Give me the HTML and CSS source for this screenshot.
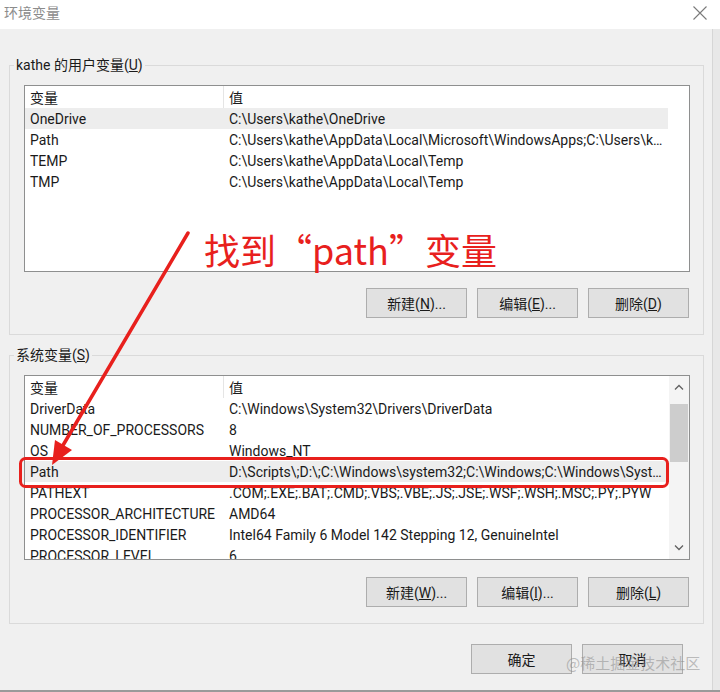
FILE: index.html
```html
<!DOCTYPE html>
<html lang="zh-CN">
<head>
    <meta charset="UTF-8">
    <title>环境变量</title>
    <link rel="stylesheet" href="styles.css">
</head>
<body>
    <!-- barra de titulo -->
    <div class="titlebar">
        <span class="title">环境变量</span>
        <svg class="close" width="14" height="14" viewBox="0 0 14 14">
            <path d="M0.5 0.5 L13.5 13.5 M13.5 0.5 L0.5 13.5" stroke="#7a7a7a" stroke-width="1.1" fill="none"/>
        </svg>
    </div>

    <div class="frame">
        <div class="main">
            <!-- variables de usuario -->
            <fieldset class="group">
                <legend>kathe 的用户变量(<u>U</u>)</legend>
                <div class="list list-user">
                    <div class="rows">
                        <div class="row head"><div class="cell">变量</div><div class="cell">值</div></div>
                        <div class="row selected"><div class="cell">OneDrive</div><div class="cell">C:\Users\kathe\OneDrive</div></div>
                        <div class="row"><div class="cell">Path</div><div class="cell">C:\Users\kathe\AppData\Local\Microsoft\WindowsApps;C:\Users\kathe\AppData\Local\Programs</div></div>
                        <div class="row"><div class="cell">TEMP</div><div class="cell">C:\Users\kathe\AppData\Local\Temp</div></div>
                        <div class="row"><div class="cell">TMP</div><div class="cell">C:\Users\kathe\AppData\Local\Temp</div></div>
                    </div>
                </div>
                <div class="buttons">
                    <button class="btn">新建(<u>N</u>)...</button>
                    <button class="btn">编辑(<u>E</u>)...</button>
                    <button class="btn">删除(<u>D</u>)</button>
                </div>
            </fieldset>

            <!-- variables de sistema -->
            <fieldset class="group group-system">
                <legend>系统变量(<u>S</u>)</legend>
                <div class="list list-system">
                    <div class="rows">
                        <div class="row head"><div class="cell">变量</div><div class="cell">值</div></div>
                        <div class="row"><div class="cell">DriverData</div><div class="cell">C:\Windows\System32\Drivers\DriverData</div></div>
                        <div class="row"><div class="cell">NUMBER_OF_PROCESSORS</div><div class="cell">8</div></div>
                        <div class="row"><div class="cell">OS</div><div class="cell">Windows_NT</div></div>
                        <div class="row selected"><div class="cell">Path</div><div class="cell">D:\Scripts\;D:\;C:\Windows\system32;C:\Windows;C:\Windows\System32\Wbem</div></div>
                        <div class="row"><div class="cell">PATHEXT</div><div class="cell">.COM;.EXE;.BAT;.CMD;.VBS;.VBE;.JS;.JSE;.WSF;.WSH;.MSC;.PY;.PYW</div></div>
                        <div class="row"><div class="cell">PROCESSOR_ARCHITECTURE</div><div class="cell">AMD64</div></div>
                        <div class="row"><div class="cell">PROCESSOR_IDENTIFIER</div><div class="cell">Intel64 Family 6 Model 142 Stepping 12, GenuineIntel</div></div>
                        <div class="row"><div class="cell">PROCESSOR_LEVEL</div><div class="cell">6</div></div>
                    </div>
                    <div class="scrollbar">
                        <div class="sb-btn">
                            <svg width="10" height="6" viewBox="0 0 10 6"><path d="M1 5.5 L5 1.5 L9 5.5" stroke="#606060" stroke-width="1.3" fill="none"/></svg>
                        </div>
                        <div class="sb-track"><div class="sb-thumb"></div></div>
                        <div class="sb-btn">
                            <svg width="10" height="6" viewBox="0 0 10 6"><path d="M1 0.5 L5 4.5 L9 0.5" stroke="#606060" stroke-width="1.3" fill="none"/></svg>
                        </div>
                    </div>
                </div>
                <div class="buttons">
                    <button class="btn">新建(<u>W</u>)...</button>
                    <button class="btn">编辑(<u>I</u>)...</button>
                    <button class="btn">删除(<u>L</u>)</button>
                </div>
            </fieldset>

            <div class="buttons dialog-buttons">
                <button class="btn">确定</button>
                <button class="btn">取消</button>
            </div>
        </div>
        <div class="edge"></div>
    </div>

    <!-- anotacion roja encima -->
    <svg class="annotation" width="720" height="692" viewBox="0 0 720 692">
        <line x1="188" y1="233" x2="62" y2="447" stroke="#e8201d" stroke-width="3.5" stroke-linecap="round"/>
        <polygon points="52,465 72,450 55,440" fill="#e8201d"/>
        <rect x="20.5" y="458.5" width="647" height="28" rx="5" ry="5" fill="none" stroke="#e8201d" stroke-width="3"/>
    </svg>
    <div class="annotation-text">找到“path”变量</div>

    <div class="watermark">@稀土掘金技术社区</div>
</body>
</html>
```

FILE: styles.css
```css
html {
    background-color: #f0f0f0;
}

body {
    margin: 0;
    width: 720px;
    height: 690px;
    overflow: hidden;
    position: relative;
    background-color: #f0f0f0;
    border-bottom: 2px solid #9a9a9a;
    font-family: "Noto Sans CJK SC", sans-serif;
    font-size: 15px;
    color: #1a1a1a;
}

.titlebar {
    height: 24px;
    padding: 0 13px 5px 4px;
    background-color: white;
    display: flex;
    align-items: center;
    justify-content: space-between;
}

.title {
    color: #8c8c8c;
    font-size: 14px;
}

.close {
    margin-top: 1px;
}

.frame {
    display: flex;
    height: 661px;
}

.main {
    width: 712px;
}

.edge {
    width: 7px;
    background-color: #e8e8e8;
    border-left: 1px solid #d6d6d6;
}

.group {
    margin: 26px 8px 0 9px;
    padding: 10px 13px 16px 14px;
    border: 1px solid #dadada;
    min-width: 0;
}

.group legend {
    margin-left: -10px;
    padding: 0 2px;
    line-height: 20px;
    font-size: 14px;
    font-family: Roboto, "Noto Sans CJK SC", sans-serif;
}

.group-system {
    margin-top: 10px;
}

.list {
    width: 666px;
    box-sizing: border-box;
    border: 1px solid #8e8f8f;
    background-color: white;
    display: flex;
    overflow: hidden;
}

.list-user {
    height: 187px;
}

.list-user .rows {
    width: 643px;
}

.list-system {
    height: 185px;
}

.list-system .rows {
    width: 644px;
}

.row {
    display: grid;
    grid-template-columns: 199px 1fr;
    height: 21px;
    font-family: Roboto, "Noto Sans CJK SC", sans-serif;
    font-size: 14px;
}

.row .cell {
    box-sizing: border-box;
    height: 21px;
    padding-top: 2px;
    line-height: 19px;
}

.row.head {
    height: 22px;
}

.row.head .cell {
    font-family: "Noto Sans CJK SC", sans-serif;
    height: 22px;
    padding-top: 0;
    line-height: 22px;
}

.row.head .cell:first-child {
    border-right: 1px solid #e5e5e5;
}

.row.selected {
    background-color: #ededed;
}

.cell {
    padding-left: 5px;
    padding-right: 3px;
    white-space: nowrap;
    overflow: hidden;
    text-overflow: ellipsis;
}

.scrollbar {
    width: 20px;
    margin-left: auto;
    display: flex;
    flex-direction: column;
    background-color: #f4f4f4;
}

.sb-btn {
    height: 22px;
    display: flex;
    align-items: center;
    justify-content: center;
}

.sb-track {
    flex: 1;
    padding: 6px 1px 0 1px;
}

.sb-thumb {
    height: 58px;
    background-color: #cdcdcd;
}

.buttons {
    display: flex;
    justify-content: flex-end;
    gap: 10px;
    margin-top: 16px;
    padding-right: 1px;
}

.group-system .buttons {
    margin-top: 17px;
}

.btn {
    width: 101px;
    height: 30px;
    border: 1px solid #adadad;
    background-color: #e1e1e1;
    font-family: Roboto, "Noto Sans CJK SC", sans-serif;
    font-size: 14px;
    color: #1a1a1a;
    padding: 0;
}

.dialog-buttons {
    margin-top: 20px;
    padding-right: 29px;
}

.annotation {
    position: absolute;
    top: 0;
    left: 0;
    pointer-events: none;
}

.annotation-text {
    position: absolute;
    left: 204px;
    top: 226px;
    font-size: 36px;
    line-height: 46px;
    color: #e8201d;
    white-space: nowrap;
}

.watermark {
    position: absolute;
    left: 566px;
    top: 653px;
    font-size: 15px;
    line-height: 20px;
    color: rgba(140, 140, 140, 0.55);
    white-space: nowrap;
}
```
